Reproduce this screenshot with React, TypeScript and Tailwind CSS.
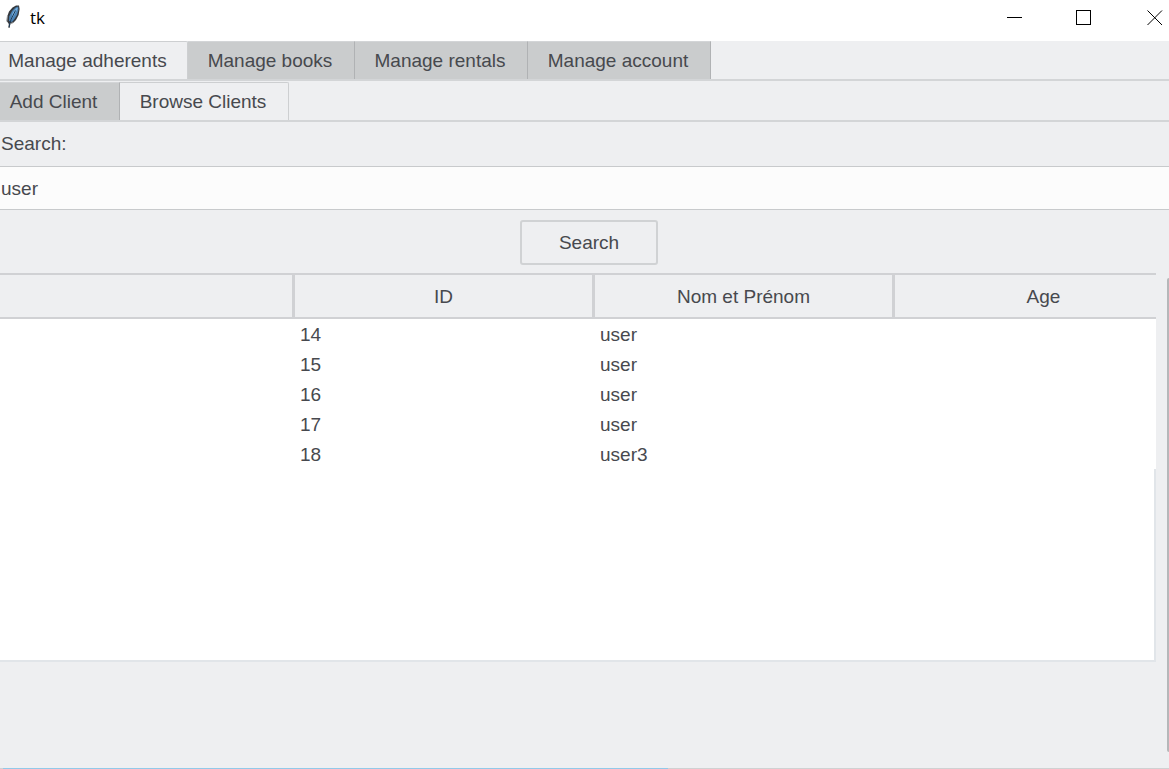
import { useState } from "react";

const mainTabs = [
  { label: "Manage adherents", size: "w-[188px] pr-3" },
  { label: "Manage books", size: "w-[167px] pr-[2px]" },
  { label: "Manage rentals", size: "w-[173px] pr-[2px]" },
  { label: "Manage account", size: "w-[183px] pr-[2px]" },
];

const subTabs = [
  { label: "Add Client", size: "w-[120px] pr-3" },
  { label: "Browse Clients", size: "w-[169px] pr-[2px]" },
];

const clients = [
  { id: 14, name: "user", age: "" },
  { id: 15, name: "user", age: "" },
  { id: 16, name: "user", age: "" },
  { id: 17, name: "user", age: "" },
  { id: 18, name: "user3", age: "" },
];

type Tab = { label: string; size: string };

function TabBar({
  tabs,
  active,
  onSelect,
  label,
}: {
  tabs: Tab[];
  active: number;
  onSelect: (index: number) => void;
  label: string;
}) {
  return (
    <div role="tablist" aria-label={label} className="flex h-10 shrink-0 border-b-2 border-[#d3d5d7]">
      {tabs.map((tab, index) => (
        <button
          key={tab.label}
          type="button"
          role="tab"
          aria-selected={index === active}
          onClick={() => onSelect(index)}
          className={`${tab.size} shrink-0 whitespace-nowrap border-t border-r pt-px text-center ${
            index === active
              ? "rounded-tr-xs border-[#cdcfd1] bg-[#eeeff1]"
              : "border-t-[#d3d5d7] border-r-[#b0b2b4] bg-[#cacccd]"
          }`}
        >
          {tab.label}
        </button>
      ))}
    </div>
  );
}

function Feather() {
  return (
    <svg width="16" height="24" viewBox="0 0 16 24" aria-hidden="true">
      <path d="M3.5 23 3.8 19 1.8 16 2 12 4 6.5 7.5 2.5 11 .4 14 .4 14.6 4 13.6 10 11 15 8 18 5.5 18.5 4.5 23Z" fill="#34383d" />
      <path d="M4 16 4.2 11.5 7 6 10.5 2.5 13.2 1.6 13.4 5 12 10 9.5 14 7 17Z" fill="#4b82b4" />
      <path d="M7.5 8 11.5 3 12.8 3.2 9.5 9.5 6.5 14.5Z" fill="#7db4e0" />
      <path d="M4 22 6 14.5 10.5 5.5" fill="none" stroke="#1f3c58" strokeWidth="1" />
      <path d="M1.8 16.5 2.5 10.5M5.5 18.5 8.5 17.5" fill="none" stroke="#9a9c9e" strokeWidth="1" />
    </svg>
  );
}

export default function App() {
  const [mainTab, setMainTab] = useState(0);
  const [subTab, setSubTab] = useState(1);
  const [query, setQuery] = useState("user");

  return (
    <div className="flex h-screen flex-col overflow-hidden bg-[#eeeff1] font-['Liberation_Sans',Arial,sans-serif] text-[19px] leading-6 text-[#47494e]">
      <header className="flex h-[41px] shrink-0 items-start justify-between bg-white pl-[5px] text-black">
        <div className="flex items-center gap-[9px] pt-1">
          <Feather />
          <h1 className="pt-[2px] font-['Open_Sans',sans-serif] text-[17px] leading-6">tk</h1>
        </div>
        <div className="flex h-[33px] items-center gap-[53px] pr-[6px]">
          <button type="button" aria-label="Minimize">
            <svg width="16" height="16" viewBox="0 0 16 16" shapeRendering="crispEdges">
              <path d="M0 8.5H15" stroke="currentColor" />
            </svg>
          </button>
          <button type="button" aria-label="Maximize">
            <svg width="16" height="16" viewBox="0 0 16 16" shapeRendering="crispEdges">
              <rect x=".5" y="1.5" width="14" height="14" fill="none" stroke="currentColor" />
            </svg>
          </button>
          <button type="button" aria-label="Close" className="pl-[2px]">
            <svg width="16" height="16" viewBox="0 0 16 16">
              <path d="M.5 1.5 15 16M15 1.5.5 16" stroke="currentColor" />
            </svg>
          </button>
        </div>
      </header>

      <TabBar label="Sections" tabs={mainTabs} active={mainTab} onSelect={setMainTab} />
      <div className="h-px shrink-0" />
      <TabBar label="Clients" tabs={subTabs} active={subTab} onSelect={setSubTab} />

      <form className="flex shrink-0 flex-col" onSubmit={(event) => event.preventDefault()}>
        <label htmlFor="search" className="flex h-11 items-center px-px">
          Search:
        </label>
        <input
          id="search"
          value={query}
          onChange={(event) => setQuery(event.target.value)}
          className="h-11 w-full border-y border-[#c8cacc] bg-[#fcfcfc] px-px pt-px outline-none"
        />
        <div className="flex justify-center pt-[10px] pb-2 pl-[9px]">
          <button
            type="submit"
            className="h-[45px] w-[138px] rounded-[3px] border-2 border-[#d0d2d4] bg-[#eeeff1]"
          >
            Search
          </button>
        </div>
      </form>

      <main className="flex min-h-0 flex-1 items-start justify-between">
        <div className="mr-[11px] min-w-0 flex-1 overflow-hidden">
          <table className="w-[1195px] table-fixed border-separate border-spacing-0">
            <colgroup>
              <col className="w-[295px]" />
              <col className="w-[300px]" />
              <col className="w-[300px]" />
              <col className="w-[300px]" />
            </colgroup>
            <thead>
              <tr className="h-[46px]">
                {["", "ID", "Nom et Prénom", "Age"].map((heading) => (
                  <th
                    key={heading}
                    scope="col"
                    className="border-t-2 border-r-3 border-b-2 border-[#d0d1d4] px-0 pt-[2px] pb-0 text-center font-normal"
                  >
                    {heading}
                  </th>
                ))}
              </tr>
            </thead>
            <tbody className="bg-white">
              {clients.map((client) => (
                <tr key={client.id} className="h-[30px]">
                  <td className="p-0" />
                  <td className="px-[5px] pt-[2px] pb-0">{client.id}</td>
                  <td className="px-[5px] pt-[2px] pb-0">{client.name}</td>
                  <td className="px-[5px] pt-[2px] pb-0">{client.age}</td>
                </tr>
              ))}
            </tbody>
          </table>
          <div className="h-[193px] border-r-2 border-b-2 border-[#e1e5e9] bg-white" />
        </div>
        <div className="mt-[5px] mb-4 w-[2px] self-stretch rounded-l-xs bg-[#b5b7b9]" />
      </main>

      <footer className="flex h-px shrink-0 bg-[#cfd1d2] pl-[3px]">
        <div className="w-[57%] bg-[#92c9e9]" />
      </footer>
    </div>
  );
}
